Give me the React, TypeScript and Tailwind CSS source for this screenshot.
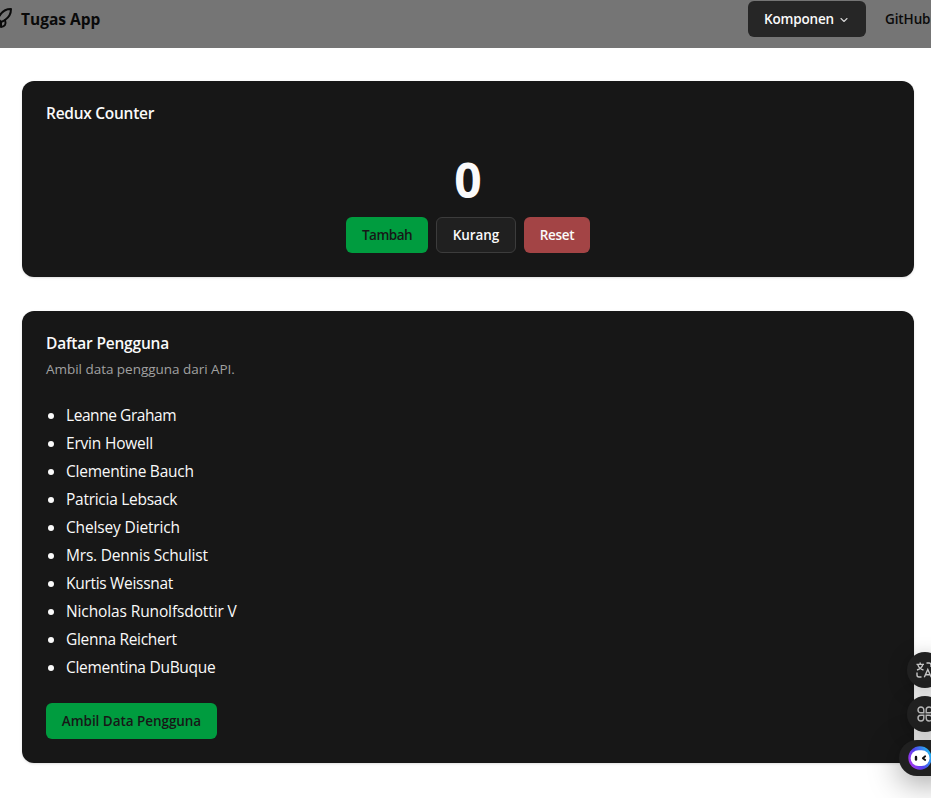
import type { ReactNode } from "react";
import { ChevronDown, Rocket } from "lucide-react";

const users = [
  { name: "Leanne Graham", tracking: "tracking-[-0.44px]" },
  { name: "Ervin Howell", tracking: "tracking-[-0.2px]" },
  { name: "Clementine Bauch", tracking: "tracking-[-0.25px]" },
  { name: "Patricia Lebsack", tracking: "tracking-[-0.27px]" },
  { name: "Chelsey Dietrich", tracking: "tracking-[-0.15px]" },
  { name: "Mrs. Dennis Schulist", tracking: "tracking-[-0.2px]" },
  { name: "Kurtis Weissnat", tracking: "tracking-[-0.3px]" },
  { name: "Nicholas Runolfsdottir V", tracking: "tracking-[-0.12px]" },
  { name: "Glenna Reichert", tracking: "tracking-[-0.3px]" },
  { name: "Clementina DuBuque", tracking: "tracking-[-0.28px]" },
];

function Card({ className, children }: { className: string; children: ReactNode }) {
  return (
    <section className={`w-[892px] rounded-xl bg-[#171717] px-6 text-[#fafafa] shadow-sm ${className}`}>
      {children}
    </section>
  );
}

function Button({ className, children }: { className: string; children: ReactNode }) {
  return (
    <button
      className={`flex h-9 shrink-0 items-center justify-center rounded-md text-[13.5px] leading-5 font-semibold whitespace-nowrap ${className}`}
    >
      {children}
    </button>
  );
}

function TranslateIcon() {
  return (
    <svg className="block h-4 w-4 shrink-0" viewBox="0 0 16 16" fill="none" stroke="#c4c4c4" strokeWidth="1.4">
      <path d="M0.5 2.4H8M4.2 0.6V2.4M6.8 2.6C6.1 5.2 3.8 7.1 1 8M1.8 2.6C2.5 5 4.8 7.3 7.5 8" />
      <path d="M10.5 1H13Q15 1 15 3V5M1 10.5V13Q1 15 3 15H5.5" />
      <path d="M8.3 15.3L11.8 7.4L15.3 15.3M9.4 12.8H14.2" />
    </svg>
  );
}

function AppsIcon() {
  return (
    <svg className="block h-4 w-4 shrink-0" viewBox="0 0 16 16" fill="none" stroke="#b8b8b8" strokeWidth="1.4">
      <path d="M6.8 6.8H3.9A2.9 2.9 0 1 1 6.8 3.9ZM9.2 6.8V3.9A2.9 2.9 0 1 1 12.1 6.8ZM6.8 9.2V12.1A2.9 2.9 0 1 1 3.9 9.2ZM9.2 9.2H12.1A2.9 2.9 0 1 1 9.2 12.1Z" />
    </svg>
  );
}

function AssistantIcon() {
  return (
    <svg className="block h-6 w-6 shrink-0" viewBox="0 0 24 24" fill="none">
      <defs>
        <linearGradient id="ring" x1="2" y1="19" x2="23" y2="8" gradientUnits="userSpaceOnUse">
          <stop stopColor="#a934ef" />
          <stop offset="0.45" stopColor="#5143ef" />
          <stop offset="1" stopColor="#23b5f2" />
        </linearGradient>
      </defs>
      <circle cx="12" cy="12" r="11.7" fill="url(#ring)" />
      <rect x="2.7" y="4.2" width="18.8" height="15.8" rx="7.8" fill="white" />
      <path d="M8 11V13.6" stroke="#111" strokeWidth="2.4" strokeLinecap="round" />
      <path d="M17.2 10.3L14.8 12.2L17.2 14" stroke="#111" strokeWidth="1.8" strokeLinecap="round" strokeLinejoin="round" />
    </svg>
  );
}

export default function App() {
  return (
    <div className="relative h-[798px] w-[931px] overflow-hidden bg-white font-['Open_Sans','Noto_Sans',sans-serif]">
      <header className="flex h-12 items-start bg-[#757575] text-[#0a0a0a]">
        <div className="-ml-[11px] flex h-[38px] items-center gap-2">
          <Rocket size={24} strokeWidth={2} className="shrink-0" />
          <span className="text-[15.5px] leading-6 font-bold">Tugas App</span>
        </div>
        <nav className="mr-[-16px] ml-auto flex items-center pt-px">
          <Button className="w-[118px] gap-1 bg-[#262626] text-[#fafafa]">
            <span className="tracking-[-0.15px]">Komponen</span>
            <ChevronDown size={12} strokeWidth={2.2} className="mt-0.5 text-[#d4d4d4]" />
          </Button>
          <Button className="ml-1 w-[77px] justify-start pl-[15px] tracking-[-0.1px]">GitHub</Button>
        </nav>
      </header>

      <main className="flex flex-col gap-[34px] pt-[33px] pl-[22px]">
        <Card className="h-[196px] pt-5">
          <h2 className="text-[15.5px] leading-6 font-semibold tracking-[-0.27px]">Redux Counter</h2>
          <div className="mt-[31px] text-center text-5xl leading-[48px] font-bold">0</div>
          <div className="mt-[13px] flex justify-center gap-2">
            <Button className="w-[82px] bg-[#009c3f] tracking-[-0.5px] text-[#171717]">Tambah</Button>
            <Button className="w-20 border border-[#3c3c3c] bg-[#202020] tracking-[-0.1px]">Kurang</Button>
            <Button className="w-[66px] bg-[#a34445] tracking-[-0.3px]">Reset</Button>
          </div>
        </Card>

        <Card className="h-[452px] pt-5">
          <h2 className="text-[15.5px] leading-6 font-semibold tracking-[-0.2px]">Daftar Pengguna</h2>
          <p className="mt-1 text-[13.5px] leading-5 tracking-[-0.03px] text-[#a1a1a1]">Ambil data pengguna dari API.</p>
          <ul className="mt-6 flex list-disc flex-col gap-1 pl-5">
            {users.map((user) => (
              <li key={user.name} className={`text-[15.5px] leading-6 ${user.tracking}`}>
                {user.name}
              </li>
            ))}
          </ul>
          <Button className="mt-6 w-[171px] bg-[#009c3f] tracking-[-0.05px] text-[#171717]">Ambil Data Pengguna</Button>
        </Card>
      </main>

      <aside className="absolute top-[652px] left-[899px] flex flex-col gap-2">
        <div className="ml-2 flex h-9 w-9 items-center rounded-full bg-[#202020] pl-[9px] shadow-[0_4px_20px_rgba(0,0,0,0.28)]">
          <TranslateIcon />
        </div>
        <div className="ml-2 flex h-9 w-9 items-center rounded-full bg-[#202020] pl-[10px] shadow-[0_4px_20px_rgba(0,0,0,0.28)]">
          <AppsIcon />
        </div>
        <div className="flex h-9 w-14 items-center rounded-full bg-[#202020] pl-[9px] shadow-[0_6px_32px_rgba(0,0,0,0.4)]">
          <AssistantIcon />
        </div>
      </aside>
    </div>
  );
}
